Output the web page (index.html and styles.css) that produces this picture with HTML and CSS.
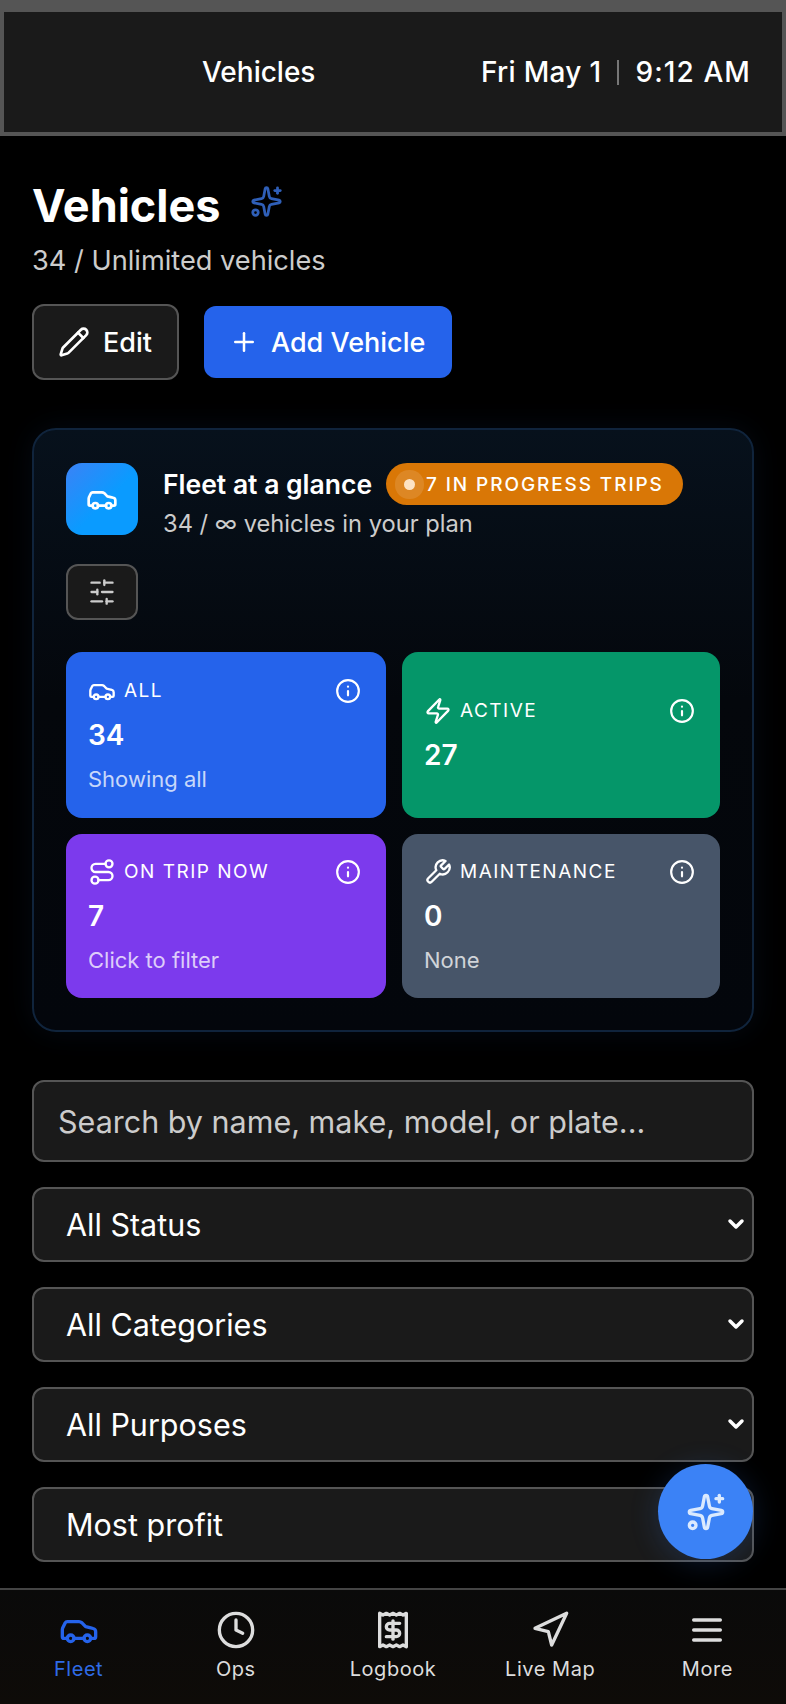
FILE: index.html
```html
<!DOCTYPE html>
<html lang="en">
<head>
    <meta charset="UTF-8">
    <meta name="viewport" content="width=device-width, initial-scale=1.0">
    <title>Vehicles</title>
    <link rel="stylesheet" href="styles.css">
</head>
<body>

    <svg class="sprites" width="0" height="0">
        <symbol id="i-car" viewBox="0 0 24 24"><path d="M19 17h2c.6 0 1-.4 1-1v-3c0-.9-.7-1.7-1.5-1.9C18.7 10.6 16 10 16 10s-1.3-1.4-2.2-2.3c-.5-.4-1.1-.7-1.8-.7H5c-.6 0-1.1.4-1.4.9l-1.4 2.9A3.7 3.7 0 0 0 2 12v4c0 .6.4 1 1 1h2"/><circle cx="7" cy="17" r="2"/><path d="M9 17h6"/><circle cx="17" cy="17" r="2"/></symbol>
        <symbol id="i-sparkles" viewBox="0 0 24 24"><path d="M11.017 2.814a1 1 0 0 1 1.966 0l1.051 5.558a2 2 0 0 0 1.594 1.594l5.558 1.051a1 1 0 0 1 0 1.966l-5.558 1.051a2 2 0 0 0-1.594 1.594l-1.051 5.558a1 1 0 0 1-1.966 0l-1.051-5.558a2 2 0 0 0-1.594-1.594l-5.558-1.051a1 1 0 0 1 0-1.966l5.558-1.051a2 2 0 0 0 1.594-1.594z"/><path d="M20 2v4"/><path d="M22 4h-4"/><circle cx="4" cy="20" r="2"/></symbol>
        <symbol id="i-pencil" viewBox="0 0 24 24"><path d="M21.174 6.812a1 1 0 0 0-3.986-3.987L3.842 16.174a2 2 0 0 0-.5.83l-1.321 4.352a.5.5 0 0 0 .623.622l4.353-1.32a2 2 0 0 0 .83-.497z"/><path d="m15 5 4 4"/></symbol>
        <symbol id="i-plus" viewBox="0 0 24 24"><path d="M5 12h14"/><path d="M12 5v14"/></symbol>
        <symbol id="i-sliders" viewBox="0 0 24 24"><path d="M21 4h-7"/><path d="M10 4H3"/><path d="M21 12h-9"/><path d="M8 12H3"/><path d="M21 20h-5"/><path d="M12 20H3"/><path d="M14 2v4"/><path d="M8 10v4"/><path d="M16 18v4"/></symbol>
        <symbol id="i-info" viewBox="0 0 24 24"><circle cx="12" cy="12" r="10"/><path d="M12 16v-4"/><path d="M12 8h.01"/></symbol>
        <symbol id="i-zap" viewBox="0 0 24 24"><path d="M4 14a1 1 0 0 1-.78-1.63l9.9-10.2a.5.5 0 0 1 .86.46l-1.92 6.02A1 1 0 0 0 13 10h7a1 1 0 0 1 .78 1.63l-9.9 10.2a.5.5 0 0 1-.86-.46l1.92-6.02A1 1 0 0 0 11 14z"/></symbol>
        <symbol id="i-route" viewBox="0 0 24 24"><circle cx="6" cy="19" r="3"/><path d="M9 19h8.5a3.5 3.5 0 0 0 0-7h-11a3.5 3.5 0 0 1 0-7H15"/><circle cx="18" cy="5" r="3"/></symbol>
        <symbol id="i-wrench" viewBox="0 0 24 24"><path d="M14.7 6.3a1 1 0 0 0 0 1.4l1.6 1.6a1 1 0 0 0 1.4 0l3.77-3.77a6 6 0 0 1-7.94 7.94l-6.91 6.91a2.12 2.12 0 0 1-3-3l6.91-6.91a6 6 0 0 1 7.94-7.94l-3.76 3.76z"/></symbol>
        <symbol id="i-clock" viewBox="0 0 24 24"><circle cx="12" cy="12" r="10"/><path d="M12 6v6l4 2"/></symbol>
        <symbol id="i-receipt" viewBox="0 0 24 24"><path d="M4 2v20l2-1 2 1 2-1 2 1 2-1 2 1 2-1 2 1V2l-2 1-2-1-2 1-2-1-2 1-2-1-2 1Z"/><path d="M16 8h-6a2 2 0 1 0 0 4h4a2 2 0 1 1 0 4H8"/><path d="M12 17.5v-11"/></symbol>
        <symbol id="i-nav" viewBox="0 0 24 24"><path d="M3 11 22 2 13 21 11 13 3 11z"/></symbol>
        <symbol id="i-menu" viewBox="0 0 24 24"><path d="M4 6h16"/><path d="M4 12h16"/><path d="M4 18h16"/></symbol>
        <symbol id="i-chevron" viewBox="0 0 24 24"><path d="m6 9 6 6 6-6"/></symbol>
    </svg>

    <header class="topbar">
        <span class="topbar-title">Vehicles</span>
        <span class="topbar-clock"><span class="clock-date">Fri May 1</span><i class="topbar-sep"></i><span class="clock-time">9:12 AM</span></span>
    </header>

    <main class="page">
        <div class="page-title">
            <h1>Vehicles</h1>
            <svg class="icon title-spark"><use href="#i-sparkles"/></svg>
        </div>
        <p class="page-sub">34 / Unlimited vehicles</p>

        <div class="actions">
            <button class="btn btn-edit"><svg class="icon"><use href="#i-pencil"/></svg>Edit</button>
            <button class="btn btn-add"><svg class="icon"><use href="#i-plus"/></svg>Add Vehicle</button>
        </div>

        <section class="glance">
            <div class="glance-head">
                <div class="glance-icon"><svg class="icon"><use href="#i-car"/></svg></div>
                <div>
                    <div class="glance-title">
                        <h2>Fleet at a glance</h2>
                        <span class="pill"><i class="pill-dot"></i>7 IN PROGRESS TRIPS</span>
                    </div>
                    <p class="glance-sub">34 / ∞ vehicles in your plan</p>
                </div>
            </div>

            <button class="tune"><svg class="icon"><use href="#i-sliders"/></svg></button>

            <div class="tiles">
                <div class="tile tile-blue">
                    <div class="tile-head">
                        <svg class="icon"><use href="#i-car"/></svg><span>ALL</span>
                        <svg class="icon tile-info"><use href="#i-info"/></svg>
                    </div>
                    <div class="tile-num">34</div>
                    <div class="tile-note">Showing all</div>
                </div>
                <div class="tile tile-green">
                    <div class="tile-head">
                        <svg class="icon"><use href="#i-zap"/></svg><span>ACTIVE</span>
                        <svg class="icon tile-info"><use href="#i-info"/></svg>
                    </div>
                    <div class="tile-num">27</div>
                </div>
                <div class="tile tile-purple">
                    <div class="tile-head">
                        <svg class="icon"><use href="#i-route"/></svg><span>ON TRIP NOW</span>
                        <svg class="icon tile-info"><use href="#i-info"/></svg>
                    </div>
                    <div class="tile-num">7</div>
                    <div class="tile-note">Click to filter</div>
                </div>
                <div class="tile tile-slate">
                    <div class="tile-head">
                        <svg class="icon"><use href="#i-wrench"/></svg><span>MAINTENANCE</span>
                        <svg class="icon tile-info"><use href="#i-info"/></svg>
                    </div>
                    <div class="tile-num">0</div>
                    <div class="tile-note">None</div>
                </div>
            </div>
        </section>

        <div class="filters">
            <input class="search" type="text" placeholder="Search by name, make, model, or plate...">
            <div class="select-wrap">
                <select><option>All Status</option></select>
                <svg class="icon select-chevron"><use href="#i-chevron"/></svg>
            </div>
            <div class="select-wrap">
                <select><option>All Categories</option></select>
                <svg class="icon select-chevron"><use href="#i-chevron"/></svg>
            </div>
            <div class="select-wrap">
                <select><option>All Purposes</option></select>
                <svg class="icon select-chevron"><use href="#i-chevron"/></svg>
            </div>
            <div class="select-wrap">
                <select><option>Most profit</option></select>
                <svg class="icon select-chevron"><use href="#i-chevron"/></svg>
            </div>
        </div>
    </main>

    <button class="fab"><svg class="icon"><use href="#i-sparkles"/></svg></button>

    <nav class="tabbar">
        <a class="tab tab-active"><svg class="icon"><use href="#i-car"/></svg>Fleet</a>
        <a class="tab"><svg class="icon"><use href="#i-clock"/></svg>Ops</a>
        <a class="tab"><svg class="icon"><use href="#i-receipt"/></svg>Logbook</a>
        <a class="tab"><svg class="icon"><use href="#i-nav"/></svg>Live Map</a>
        <a class="tab"><svg class="icon"><use href="#i-menu"/></svg>More</a>
    </nav>

</body>
</html>
```

FILE: styles.css
```css
* { box-sizing: border-box; }
html, body { margin: 0; padding: 0; }
body { position: relative; width: 786px; height: 1704px; overflow: hidden; background: #000; color: #fff; font-family: Inter, "Liberation Sans", sans-serif; }
h1, h2, p { margin: 0; }
button { font-family: inherit; color: inherit; cursor: pointer; }

.sprites { position: absolute; }
.icon { fill: none; stroke: currentColor; stroke-width: 2; stroke-linecap: round; stroke-linejoin: round; flex-shrink: 0; }

.topbar { height: 136px; display: flex; align-items: center; justify-content: space-between; padding: 0 31px 0 198px; background: #1a1a1a; border: 4px solid #555; border-top-width: 12px; font-size: 28px; font-weight: 500; }
.topbar-clock { display: flex; align-items: center; }
.clock-date { letter-spacing: .3px; }
.clock-time { letter-spacing: 1.1px; }
.topbar-sep { width: 2px; height: 25px; margin: 0 16px; background: #777; }

.page { padding: 0 32px; }
.page-title { display: flex; align-items: flex-start; gap: 29px; margin-top: 42px; }
.page-title h1 { font-size: 45px; line-height: 56px; font-weight: 700; }
.title-spark { width: 33px; height: 33px; margin-top: 7px; color: #2f5fb8; }
.page-sub { margin-top: 11px; font-size: 27.2px; line-height: 32px; color: #ccc; }

.actions { display: flex; align-items: center; gap: 25px; margin-top: 27px; }
.btn { display: flex; align-items: center; border-radius: 12px; font-size: 27px; font-weight: 500; }
.btn-edit { width: 147px; height: 76px; gap: 13px; padding: 0 0 0 24px; background: #1a1a1a; border: 2px solid #555; }
.btn-edit .icon { width: 32px; height: 32px; }
.btn-add { width: 248px; height: 72px; gap: 12px; padding: 0 0 0 25px; background: #2563eb; border: 0; }
.btn-add .icon { width: 30px; height: 30px; }

.glance { margin-top: 48px; height: 604px; padding: 33px 32px; border: 2px solid #10243c; border-radius: 24px; background: linear-gradient(180deg, #07111c, #04070c 45%, #03060c); box-shadow: 0 0 30px rgba(30, 80, 160, .12); }
.glance-head { display: flex; gap: 25px; }
.glance-icon { width: 72px; height: 72px; display: flex; align-items: center; justify-content: center; border-radius: 16px; background: linear-gradient(135deg, #3b82f6, #0a9bff 55%); }
.glance-icon .icon { width: 32px; height: 32px; }
.glance-title { display: flex; align-items: center; gap: 14px; }
.glance-title h2 { font-size: 26.5px; line-height: 42px; font-weight: 600; }
.glance-sub { margin-top: 4px; font-size: 23.7px; line-height: 30px; color: #ccc; }
.pill { display: flex; align-items: center; height: 42px; padding: 0 19px 0 18px; border-radius: 21px; background: #d97706; font-size: 19px; font-weight: 500; letter-spacing: 1.9px; color: #fff; white-space: nowrap; }
.pill-dot { position: relative; width: 11px; height: 11px; margin-right: 11px; border-radius: 50%; background: #fde3c4; box-shadow: 0 0 0 9px rgba(255, 255, 255, .12); }

.tune { display: flex; align-items: center; justify-content: center; width: 72px; height: 56px; margin-top: 25px; padding: 0; background: #1a1a1a; border: 2px solid #555; border-radius: 12px; color: #ccc; }
.tune .icon { width: 28px; height: 28px; }

.tiles { display: grid; grid-template-columns: 320px 318px; grid-template-rows: 166px 164px; gap: 16px; margin-top: 32px; }
.tile { display: flex; flex-direction: column; justify-content: center; padding: 0 22px; border-radius: 16px; }
.tile-blue { background: #2563eb; }
.tile-green { background: #059669; }
.tile-purple { background: #7c3aed; }
.tile-slate { background: #475569; }
.tile-head { display: flex; align-items: center; gap: 8px; font-size: 19px; line-height: 26px; font-weight: 400; letter-spacing: 1.5px; }
.tile-head > .icon:first-child { width: 28px; height: 28px; }
.tile-info { width: 26px; height: 26px; margin-left: auto; margin-right: 3px; }
.tile-num { margin-top: 12px; font-size: 28px; line-height: 36px; font-weight: 600; }
.tile-note { margin-top: 12px; font-size: 22px; line-height: 28px; color: rgba(255, 255, 255, .75); }

.filters { display: flex; flex-direction: column; gap: 25px; margin-top: 48px; }
.search, .select-wrap select { width: 100%; height: 75px; background: #1a1a1a; border: 2px solid #555; border-radius: 12px; color: #fff; font-family: inherit; font-size: 30.5px; outline: none; }
.search { height: 82px; padding: 0 24px; }
.search::placeholder { color: #ccc; opacity: 1; }
.select-wrap { position: relative; }
.select-wrap select { display: block; padding: 0 32px; appearance: none; }
.select-chevron { position: absolute; right: 6px; top: 25px; width: 24px; height: 24px; stroke-width: 3.5; color: #fff; }

.fab { position: absolute; left: 658px; top: 1464px; width: 95px; height: 95px; display: flex; align-items: center; justify-content: center; padding: 0; border: 0; border-radius: 50%; background: #3b82f6; box-shadow: 0 4px 30px rgba(59, 130, 246, .2); }
.fab .icon { width: 40px; height: 40px; color: #dbeafe; }

.tabbar { position: absolute; left: 0; right: 0; bottom: 0; height: 116px; display: grid; grid-template-columns: repeat(5, 1fr); padding-top: 20px; background: linear-gradient(#0a0a0a, #0e0b08); border-top: 2px solid #444; }
.tab { display: flex; flex-direction: column; align-items: center; gap: 6px; font-size: 20px; line-height: 26px; font-weight: 400; letter-spacing: .55px; color: #ddd; }
.tab .icon { width: 40px; height: 40px; }
.tab-active { color: #2f6be6; }
.tab-active .icon { color: #2563eb; }
```
